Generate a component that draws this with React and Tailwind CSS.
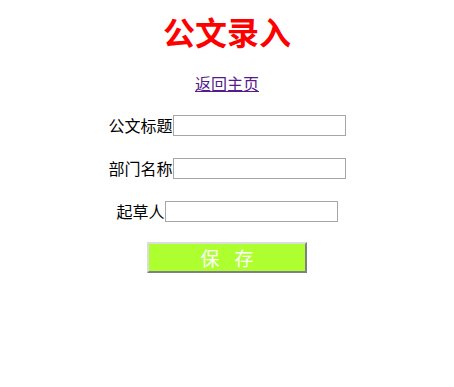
export default function App() {
  const rows = [
    { label: "公文标题" },
    { label: "部门名称" },
    { label: "起草人" },
  ];

  return (
    <div className="w-[454px] h-[387px] bg-white flex flex-col items-center font-['Noto_Sans_CJK_SC',sans-serif] text-black">
      {/* Title */}
      <h1 className="mt-[13px] h-[36px] leading-[36px] text-[32px] font-bold text-[#ff0000]">
        公文录入
      </h1>

      {/* Back link */}
      <a href="#" className="mt-[24px] h-[20px] leading-[20px] text-[16px] text-[#551a8b] underline">
        返回主页
      </a>

      {/* Form rows */}
      <div className="mt-[22px] flex flex-col items-center gap-[22px]">
        {rows.map((r) => (
          <div key={r.label} className="flex items-center h-[21px]">
            <span className="text-[16px] leading-[21px]">{r.label}</span>
            <input
              type="text"
              className="w-[173px] h-[21px] border border-[#a6a6a6] bg-white outline-none"
            />
          </div>
        ))}
      </div>

      {/* Save button */}
      <button className="mt-[20px] w-[160px] h-[31px] bg-[#adff2f] border-2 border-t-[#dcdcdc] border-l-[#dcdcdc] border-b-[#808080] border-r-[#808080] flex items-center justify-center gap-[15px] text-white text-[19px] leading-none">
        <span>保</span>
        <span>存</span>
      </button>
    </div>
  );
}
